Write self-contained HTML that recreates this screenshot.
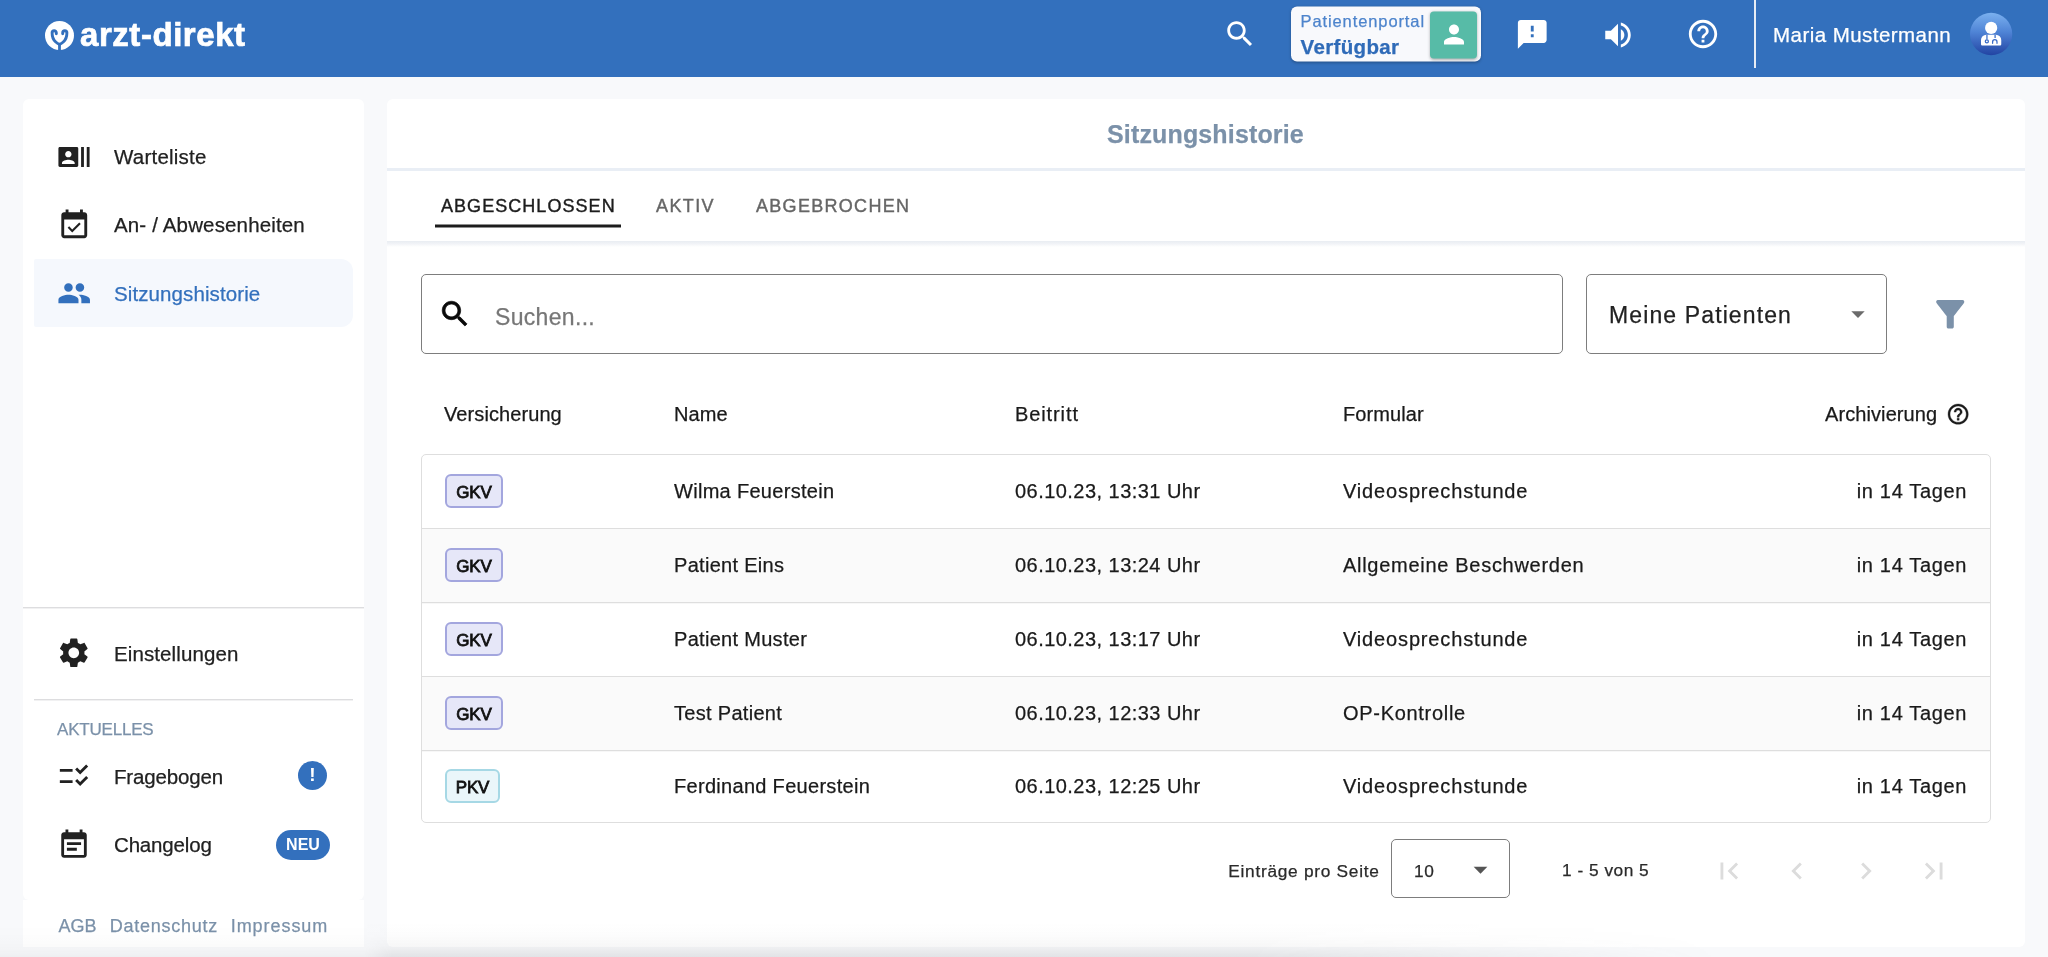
<!DOCTYPE html>
<html lang="de">
<head>
<meta charset="utf-8">
<title>arzt-direkt – Sitzungshistorie</title>
<style>
*{box-sizing:border-box;margin:0;padding:0}
html,body{width:2048px;height:957px;overflow:hidden}
body{background:#f8f9fb;font-family:"Liberation Sans",sans-serif;color:#212121;position:relative;will-change:transform}
.abs{position:absolute}
.t{position:absolute;white-space:nowrap;line-height:30px;height:30px;-webkit-text-stroke:.25px currentColor}
svg{display:block;position:absolute}

/* ---------- header ---------- */
#hdr{position:absolute;left:0;top:0;width:2048px;height:77px;background:#3370bd}
#logo-txt{left:80px;top:16.600px;font-size:33px;font-weight:bold;color:#fff;letter-spacing:.55px;-webkit-text-stroke:.7px #fff;line-height:36px;height:36px}
#pp{position:absolute;left:1291px;top:7px;width:190px;height:55px;transform:translateY(-.5px);background:#f8f9fc;border-radius:6px;box-shadow:0 1px 3px rgba(0,0,0,.25)}
#pp-g{position:absolute;left:139px;top:4.500px;width:47px;height:47px;background:#57bba7;border-radius:4px;box-shadow:0 1px 3px rgba(0,0,0,.3)}
#pp1{left:9.500px;top:.400px;font-size:16.500px;color:#4d84cc;letter-spacing:.9px;line-height:28px;height:28px}
#pp2{left:9.500px;top:25px;font-size:20.500px;font-weight:bold;color:#2f6bb8;letter-spacing:.35px}
#vdiv{position:absolute;left:1754px;top:0;width:2px;height:68px;background:#e6ecf5}
#uname{left:1773px;top:20px;font-size:20.500px;color:#fff;letter-spacing:.45px}
#avatar{position:absolute;left:1969.600px;top:12.600px;width:43px;height:43px;border-radius:50%;background:linear-gradient(180deg,#78aaea 0%,#4a82d6 45%,#2249a8 100%)}

/* ---------- sidebar ---------- */
#side{position:absolute;left:23px;top:99px;width:341px;height:801px;background:#fff;border-radius:6px}
#sidefoot{position:absolute;left:23px;top:900px;width:341px;height:47px;background:#fff}
.nav{font-size:20.500px;color:#212121}
#navact{position:absolute;left:34px;top:259px;width:319px;height:68px;background:#f5f8fd;border-radius:2px 12px 12px 2px}
.hr{position:absolute;height:1px;background:#dddddf;box-shadow:0 1px 0 rgba(221,221,223,.4)}
.lnk{font-size:18px;color:#7b91a9}

/* ---------- main ---------- */
#main{position:absolute;left:387px;top:99px;width:1638px;height:848px;background:#fff;border-radius:6px}
#title{font-size:25px;font-weight:bold;color:#7b91a9;letter-spacing:.15px}
.tab{font-size:18px;letter-spacing:1.8px;color:#666;-webkit-text-stroke:.4px currentColor}
.box{position:absolute;border:1px solid #7d7d7d;border-radius:5px;background:#fff}
.th{font-size:20px;color:#1a1a1a;top:399px;letter-spacing:.09px}
#tbl{position:absolute;left:421px;top:454px;width:1570px;height:369px;border:1px solid #dedede;border-radius:5px;background:#fff;overflow:hidden}
.row{position:absolute;left:0;width:1570px;height:74px;border-bottom:1px solid #dedede;box-shadow:0 1px 0 rgba(222,222,222,.25)}
.row.alt{background:#fafafa}
.bdg{position:absolute;left:23px;top:19px;height:34px;border-radius:6px;border:2px solid #a3a6de;background:#e6e7f8;font-size:17px;font-weight:normal;-webkit-text-stroke:.8px #111;line-height:30px;text-align:center;color:#111;letter-spacing:-.1px}
.bdg.p{border-color:#a6d8e5;background:#eaf6fa}
.c{font-size:20px;top:21.200px;color:#1a1a1a}
.c.n{font-size:20px;letter-spacing:.3px}
</style>
</head>
<body>

<!-- ================= HEADER ================= -->
<div id="hdr">
  <svg id="logo-ic" style="left:45.3px;top:20.8px" width="29" height="29" viewBox="0 0 29 29">
    <circle cx="14.5" cy="14.5" r="14.5" fill="#fff"/>
    <path d="M11.300 12.700 V11.800 A2.100 2.100 0 0 0 7.100 11.800 C7.100 15 8 18.500 10.500 20.800 C12 22.200 13.500 23 14.500 23.300 C15.500 23 17 22.200 18.500 20.800 C21 18.500 21.900 15 21.900 11.800 A2.100 2.100 0 0 0 17.700 11.800 V12.700" fill="none" stroke="#3370bd" stroke-width="2.900" stroke-linecap="round" stroke-linejoin="round"/>
    <path d="M14.500 23 V29.500" stroke="#3370bd" stroke-width="2.800"/>
  </svg>
  <div class="t" id="logo-txt">arzt-direkt</div>

  <svg style="left:1222.500px;top:16.900px" width="34" height="34" viewBox="0 0 24 24" fill="#fff"><path d="M15.5 14h-.79l-.28-.27C15.41 12.59 16 11.11 16 9.5 16 5.91 13.09 3 9.5 3S3 5.910 3 9.500 5.910 16 9.500 16c1.610 0 3.090-.590 4.230-1.570l.27.280v.790l5 4.990L20.490 19l-4.990-5zm-6 0C7.010 14 5 11.990 5 9.500S7.010 5 9.500 5 14 7.010 14 9.500 11.990 14 9.500 14z"/></svg>

  <div id="pp">
    <div class="t" id="pp1">Patientenportal</div>
    <div class="t" id="pp2">Verfügbar</div>
    <div id="pp-g"><svg style="left:9px;top:8px" width="30" height="30" viewBox="0 0 24 24" fill="#fff"><path d="M12 12c2.210 0 4-1.790 4-4s-1.790-4-4-4-4 1.790-4 4 1.790 4 4 4zm0 2c-2.670 0-8 1.340-8 4v2h16v-2c0-2.660-5.330-4-8-4z"/></svg></div>
  </div>

  <svg style="left:1515px;top:17.300px" width="34.500" height="34.500" viewBox="0 0 24 24" fill="#fff"><path d="M20 2H4c-1.100 0-1.990.9-1.990 2L2 22l4-4h14c1.100 0 2-.9 2-2V4c0-1.100-.9-2-2-2zm-7 12h-2v-2h2v2zm0-4h-2V6h2v4z"/></svg>
  <svg style="left:1601px;top:17.500px" width="34" height="34" viewBox="0 0 24 24" fill="#fff"><path d="M3 9v6h4l5 5V4L7 9H3zm13.500 3c0-1.770-1.020-3.290-2.500-4.030v8.050c1.480-.730 2.500-2.250 2.500-4.020zM14 3.230v2.060c2.890.860 5 3.540 5 6.710s-2.110 5.850-5 6.710v2.060c4.010-.910 7-4.490 7-8.770s-2.990-7.860-7-8.770z"/></svg>
  <svg style="left:1686.400px;top:17.400px" width="34" height="34" viewBox="0 0 24 24" fill="#fff"><path d="M11 18h2v-2h-2v2zm1-16C6.480 2 2 6.480 2 12s4.480 10 10 10 10-4.480 10-10S17.520 2 12 2zm0 18c-4.410 0-8-3.590-8-8s3.590-8 8-8 8 3.590 8 8-3.590 8-8 8zm0-14c-2.210 0-4 1.790-4 4h2c0-1.100.9-2 2-2s2 .9 2 2c0 2-3 1.750-3 5h2c0-2.250 3-2.500 3-5 0-2.210-1.790-4-4-4z"/></svg>

  <div id="vdiv"></div>
  <div class="t" id="uname">Maria Mustermann</div>
  <svg style="left:1969px;top:12px" width="44" height="44" viewBox="0 0 44 44">
    <defs><linearGradient id="avg" x1="0" y1="0" x2="0" y2="1"><stop offset="0" stop-color="#7ab0ef"/><stop offset=".45" stop-color="#4f84d6"/><stop offset="1" stop-color="#2244a3"/></linearGradient></defs>
    <circle cx="22.100" cy="22" r="21.150" fill="url(#avg)"/>
    <circle cx="22.150" cy="15.900" r="6.100" fill="#fff"/>
    <path d="M13.200 33.400 H31.050 a1.200 1.200 0 0 0 1.200 -1.200 V28.100 a5.300 5.300 0 0 0 -5.300 -5.300 H17.300 a5.300 5.300 0 0 0 -5.300 5.300 V32.200 a1.200 1.200 0 0 0 1.200 1.200 Z" fill="#fff"/>
    <path d="M17.950 22.800 V27.400 M26.100 22.800 V26" stroke="#3a6cc8" stroke-width="1.250" fill="none"/>
    <circle cx="17.850" cy="29.300" r="1.550" fill="none" stroke="#3a6cc8" stroke-width="1.250"/>
    <path d="M23.600 31.300 V29.900 a2.200 2.200 0 0 1 4.400 0 V31.300" fill="none" stroke="#3a6cc8" stroke-width="1.250" stroke-linecap="round"/>
  </svg>
</div>

<!-- ================= SIDEBAR ================= -->
<div id="side"></div>
<div id="sidefoot"></div>
<div id="navact"></div>

<svg style="left:56.900px;top:139.800px" width="34" height="34" viewBox="0 0 24 24" fill="#212121"><path d="M21 5v14h2V5h-2zm-4 14h2V5h-2v14zM14 5H2c-.55 0-1 .45-1 1v12c0 .55.45 1 1 1h12c.55 0 1-.45 1-1V6c0-.55-.45-1-1-1zM8 7.750c1.240 0 2.250 1.010 2.250 2.250S9.240 12.250 8 12.250 5.750 11.240 5.750 10 6.760 7.750 8 7.750zM12.500 17h-9v-.75c0-1.500 3-2.250 4.500-2.250s4.500.75 4.500 2.250V17z"/></svg>
<div class="t nav" style="left:114px;top:142px;letter-spacing:.22px">Warteliste</div>

<svg style="left:56.650px;top:207.500px" width="34.500" height="34.500" viewBox="0 0 24 24" fill="#212121"><path d="M16.530 11.060L15.470 10l-4.880 4.880-2.120-2.120-1.060 1.060L10.590 17l5.940-5.940zM19 3h-1V1h-2v2H8V1H6v2H5c-1.110 0-1.990.9-1.990 2L3 19c0 1.100.89 2 2 2h14c1.100 0 2-.9 2-2V5c0-1.100-.9-2-2-2zm0 16H5V8h14v11z"/></svg>
<div class="t nav" style="left:114px;top:210.300px;letter-spacing:.15px">An- / Abwesenheiten</div>

<svg style="left:56.700px;top:275.900px" width="34.400" height="34.400" viewBox="0 0 24 24" fill="#3370bd"><path d="M16 11c1.660 0 2.990-1.340 2.990-3S17.660 5 16 5c-1.660 0-3 1.340-3 3s1.340 3 3 3zm-8 0c1.660 0 2.990-1.340 2.990-3S9.660 5 8 5C6.340 5 5 6.340 5 8s1.340 3 3 3zm0 2c-2.330 0-7 1.170-7 3.500V19h14v-2.500c0-2.330-4.670-3.500-7-3.500zm8 0c-.29 0-.62.020-.97.050 1.160.84 1.970 1.970 1.970 3.450V19h6v-2.500c0-2.330-4.670-3.500-7-3.500z"/></svg>
<div class="t nav" style="left:114px;top:278.600px;letter-spacing:.1px;color:#3370bd">Sitzungshistorie</div>

<div class="hr" style="left:23px;top:607px;width:341px"></div>

<svg style="left:56.300px;top:635.400px" width="35.600" height="35.600" viewBox="0 0 24 24" fill="#212121"><path d="M19.140 12.940c.04-.3.060-.61.060-.94 0-.32-.020-.64-.070-.94l2.030-1.580c.18-.14.230-.41.120-.61l-1.920-3.320c-.12-.22-.37-.29-.59-.22l-2.390.96c-.5-.38-1.030-.7-1.620-.94l-.36-2.540c-.04-.24-.24-.41-.48-.41h-3.840c-.24 0-.43.17-.47.41l-.36 2.540c-.59.24-1.130.57-1.620.94l-2.390-.96c-.22-.08-.47 0-.59.22L2.740 8.870c-.12.210-.08.470.12.610l2.030 1.580c-.05.3-.09.630-.09.940s.02.640.07.940l-2.030 1.580c-.18.140-.23.410-.12.610l1.920 3.320c.12.220.37.290.59.220l2.390-.96c.5.380 1.030.7 1.620.94l.36 2.540c.05.240.24.410.48.410h3.840c.24 0 .44-.17.470-.41l.36-2.540c.59-.24 1.130-.56 1.620-.94l2.390.96c.22.080.47 0 .59-.22l1.920-3.320c.12-.22.070-.47-.12-.61l-2.010-1.580zM12 15.600c-1.980 0-3.600-1.620-3.600-3.600s1.620-3.600 3.600-3.600 3.600 1.620 3.600 3.600-1.620 3.600-3.600 3.600z"/></svg>
<div class="t nav" style="left:114px;top:639px;letter-spacing:.1px">Einstellungen</div>

<div class="hr" style="left:34px;top:699px;width:319px"></div>
<div class="t" style="left:57px;top:714.800px;font-size:17px;color:#7b91a9;letter-spacing:-.2px">AKTUELLES</div>

<svg style="left:57px;top:759px" width="34" height="34" viewBox="0 0 24 24" fill="#212121"><path d="M11 7H2v2h9V7zm0 8H2v2h9v-2zm5.340-4L12.800 7.460l1.410-1.410 2.120 2.120 4.240-4.240L22 5.340 16.340 11zm0 8-3.540-3.540 1.410-1.410 2.120 2.120 4.240-4.240L22 13.340 16.340 19z"/></svg>
<div class="t nav" style="left:114px;top:762px;letter-spacing:-.17px">Fragebogen</div>
<div class="abs" style="left:298px;top:761px;width:29px;height:29px;border-radius:50%;background:#3370bd;color:#fff;font-size:19px;font-weight:bold;text-align:center;line-height:28px">!</div>

<svg style="left:57px;top:827.700px" width="34" height="34" viewBox="0 0 24 24" fill="#212121"><path d="M17 10H7v2h10v-2zm2-7h-1V1h-2v2H8V1H6v2H5c-1.110 0-1.990.9-1.990 2L3 19c0 1.100.89 2 2 2h14c1.100 0 2-.9 2-2V5c0-1.100-.9-2-2-2zm0 16H5V8h14v11zm-5-5H7v2h7v-2z"/></svg>
<div class="t nav" style="left:114px;top:830px;letter-spacing:-.17px">Changelog</div>
<div class="abs" style="left:276px;top:830px;width:54px;height:30px;border-radius:15px;background:#3370bd;color:#fff;font-size:16px;font-weight:bold;text-align:center;line-height:30px">NEU</div>

<div class="t lnk" style="left:58.500px;top:911px">AGB</div>
<div class="t lnk" style="left:109.700px;top:911px;letter-spacing:.75px">Datenschutz</div>
<div class="t lnk" style="left:230.700px;top:911px;letter-spacing:.95px">Impressum</div>

<!-- ================= MAIN ================= -->
<div id="main"></div>
<div class="t" id="title" style="left:1107px;top:118.700px">Sitzungshistorie</div>
<div class="hr" style="left:387px;top:168px;width:1638px;height:3px;background:#e9eef5;box-shadow:none"></div>

<div class="t tab" style="left:441px;top:191.200px;color:#1c1c1c;letter-spacing:1.05px">ABGESCHLOSSEN</div>
<div class="t tab" style="left:656px;top:191.200px;letter-spacing:1.4px">AKTIV</div>
<div class="t tab" style="left:756px;top:191.200px;letter-spacing:1.3px">ABGEBROCHEN</div>
<div class="abs" style="left:435px;top:224px;width:186px;height:3px;background:#1c1c1c;transform:translateY(.5px)"></div>
<div class="abs" style="left:387px;top:241px;width:1638px;height:6px;background:linear-gradient(180deg,#e9edf2 0%,#f1f3f7 45%,#fff 100%)"></div>

<div class="box" style="left:421px;top:274px;width:1142px;height:80px"></div>
<svg style="left:438px;top:297.200px" width="34" height="34" viewBox="0 0 24 24" fill="#0a0a0a" stroke="#0a0a0a" stroke-width=".5"><path d="M15.500 14h-.79l-.28-.27C15.410 12.590 16 11.110 16 9.500 16 5.910 13.090 3 9.500 3S3 5.910 3 9.500 5.910 16 9.500 16c1.610 0 3.090-.59 4.230-1.570l.27.28v.79l5 4.990L20.490 19l-4.990-5zm-6 0C7.010 14 5 11.990 5 9.500S7.010 5 9.500 5 14 7.010 14 9.500 11.990 14 9.500 14z"/></svg>
<div class="t" style="left:495px;top:302px;font-size:23px;color:#777;letter-spacing:.32px">Suchen...</div>

<div class="box" style="left:1586px;top:274px;width:301px;height:80px"></div>
<div class="t" style="left:1609px;top:300px;font-size:23px;color:#212121;letter-spacing:1.12px">Meine Patienten</div>
<svg style="left:1841.500px;top:297.700px" width="32" height="32" viewBox="0 0 24 24" fill="#6b6b6b"><path d="M7 10l5 5 5-5z"/></svg>
<svg style="left:1929.250px;top:292.950px" width="42.500" height="42.500" viewBox="0 0 24 24" fill="#7b91a9"><path d="M4.250 5.610C6.270 8.200 10 13 10 13v6c0 .55.45 1 1 1h2c.55 0 1-.45 1-1v-6s3.720-4.800 5.740-7.390c.51-.66.040-1.610-.79-1.610H5.040c-.83 0-1.300.95-.79 1.610z"/></svg>

<div class="t th" style="left:444px">Versicherung</div>
<div class="t th" style="left:674px">Name</div>
<div class="t th" style="left:1015px;font-size:20px;letter-spacing:.9px">Beitritt</div>
<div class="t th" style="left:1343px">Formular</div>
<div class="t th" style="left:1825px">Archivierung</div>
<svg style="left:1946px;top:401.850px" width="24.300" height="24.300" viewBox="0 0 24 24" fill="#1a1a1a" stroke="#1a1a1a" stroke-width=".35"><path d="M11 18h2v-2h-2v2zm1-16C6.480 2 2 6.480 2 12s4.480 10 10 10 10-4.480 10-10S17.520 2 12 2zm0 18c-4.410 0-8-3.590-8-8s3.590-8 8-8 8 3.590 8 8-3.590 8-8 8zm0-14c-2.210 0-4 1.790-4 4h2c0-1.100.9-2 2-2s2 .9 2 2c0 2-3 1.750-3 5h2c0-2.250 3-2.500 3-5 0-2.210-1.790-4-4-4z"/></svg>

<div id="tbl">
  <div class="row" style="top:0"><div class="bdg" style="width:58px"><span style="position:relative;top:1.800px">GKV</span></div><div class="t c n" style="left:252px">Wilma Feuerstein</div><div class="t c" style="left:593px;letter-spacing:.46px">06.10.23, 13:31 Uhr</div><div class="t c" style="left:921px;letter-spacing:.85px">Videosprechstunde</div><div class="t c" style="right:25px;letter-spacing:.65px">in 14 Tagen</div></div>
  <div class="row alt" style="top:74px"><div class="bdg" style="width:58px"><span style="position:relative;top:1.800px">GKV</span></div><div class="t c n" style="left:252px">Patient Eins</div><div class="t c" style="left:593px;letter-spacing:.46px">06.10.23, 13:24 Uhr</div><div class="t c" style="left:921px;letter-spacing:.71px">Allgemeine Beschwerden</div><div class="t c" style="right:25px;letter-spacing:.65px">in 14 Tagen</div></div>
  <div class="row" style="top:148px"><div class="bdg" style="width:58px"><span style="position:relative;top:1.800px">GKV</span></div><div class="t c n" style="left:252px">Patient Muster</div><div class="t c" style="left:593px;letter-spacing:.46px">06.10.23, 13:17 Uhr</div><div class="t c" style="left:921px;letter-spacing:.85px">Videosprechstunde</div><div class="t c" style="right:25px;letter-spacing:.65px">in 14 Tagen</div></div>
  <div class="row alt" style="top:222px"><div class="bdg" style="width:58px"><span style="position:relative;top:1.800px">GKV</span></div><div class="t c n" style="left:252px">Test Patient</div><div class="t c" style="left:593px;letter-spacing:.46px">06.10.23, 12:33 Uhr</div><div class="t c" style="left:921px;letter-spacing:.7px">OP-Kontrolle</div><div class="t c" style="right:25px;letter-spacing:.65px">in 14 Tagen</div></div>
  <div class="row" style="top:296px;border-bottom:none"><div class="bdg p" style="width:55px;top:18px"><span style="position:relative;top:1.800px">PKV</span></div><div class="t c n" style="left:252px;top:20.200px">Ferdinand Feuerstein</div><div class="t c" style="left:593px;top:20.200px;letter-spacing:.46px">06.10.23, 12:25 Uhr</div><div class="t c" style="left:921px;top:20.200px;letter-spacing:.85px">Videosprechstunde</div><div class="t c" style="right:25px;top:20.200px;letter-spacing:.65px">in 14 Tagen</div></div>
</div>

<div class="t" style="left:1228.300px;top:856px;font-size:17.300px;color:#2a2a2a;letter-spacing:.72px">Einträge pro Seite</div>
<div class="box" style="left:1391px;top:839px;width:119px;height:59px"></div>
<div class="t" style="left:1414px;top:856px;font-size:17.300px;color:#2a2a2a;letter-spacing:.6px">10</div>
<svg style="left:1464.200px;top:853.200px" width="33" height="33" viewBox="0 0 24 24" fill="#555"><path d="M7 10l5 5 5-5z"/></svg>
<div class="t" style="left:1562px;top:855.200px;font-size:17.300px;color:#2a2a2a;letter-spacing:.5px">1 - 5 von 5</div>

<svg style="left:1712.300px;top:854px" width="34" height="34" viewBox="0 0 24 24" fill="#dcdcdc"><path d="M18.410 16.590L13.820 12l4.590-4.590L17 6l-6 6 6 6zM6 6h2v12H6z"/></svg>
<svg style="left:1780.300px;top:854px" width="34" height="34" viewBox="0 0 24 24" fill="#dcdcdc"><path d="M15.410 7.410L14 6l-6 6 6 6 1.410-1.410L10.830 12z"/></svg>
<svg style="left:1848.600px;top:854px" width="34" height="34" viewBox="0 0 24 24" fill="#dcdcdc"><path d="M10 6L8.590 7.410 13.170 12l-4.580 4.590L10 18l6-6z"/></svg>
<svg style="left:1916.900px;top:854px" width="34" height="34" viewBox="0 0 24 24" fill="#dcdcdc"><path d="M5.590 7.410L10.180 12l-4.590 4.590L7 18l6-6-6-6zM16 6h2v12h-2z"/></svg>

<!-- bottom fade -->
<div class="abs" style="left:0;top:922px;width:2048px;height:35px;background:linear-gradient(180deg,rgba(60,62,66,0) 0%,rgba(60,62,66,.012) 35%,rgba(60,62,66,.045) 70%,rgba(60,62,66,.115) 100%);-webkit-mask-image:linear-gradient(90deg,rgba(0,0,0,.45) 0,rgba(0,0,0,.45) 365px,#000 392px,#000 1250px,rgba(0,0,0,.15) 1640px,transparent 1720px);mask-image:linear-gradient(90deg,rgba(0,0,0,.45) 0,rgba(0,0,0,.45) 365px,#000 392px,#000 1250px,rgba(0,0,0,.15) 1640px,transparent 1720px);pointer-events:none"></div>

</body>
</html>
